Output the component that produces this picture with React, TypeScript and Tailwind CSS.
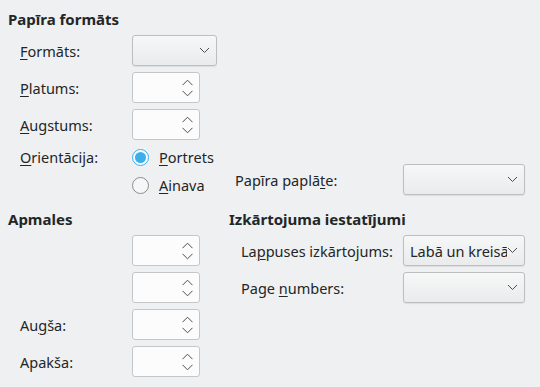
import type { ReactNode } from "react";

const font = { fontFamily: '"Noto Sans", "DejaVu Sans", sans-serif' };

function Mn({ children }: { children: ReactNode }) {
  return <span className="underline underline-offset-[2px] decoration-[1px]">{children}</span>;
}

function Chevron() {
  return (
    <svg width="11" height="7" viewBox="0 0 11 7" className="shrink-0">
      <path d="M1 1 L5.5 5.5 L10 1" fill="none" stroke="#4d4e50" strokeWidth="1" />
    </svg>
  );
}

function Combo({ w, text }: { w: string; text?: string }) {
  return (
    <div
      className={`${w} h-[31px] flex items-center pl-[6px] pr-[6px] rounded-[3px] border border-[#bcbebf] bg-gradient-to-b from-[#f6f7f7] to-[#eaebec] shadow-[0_1px_1px_rgba(0,0,0,0.08)]`}
    >
      <span className="flex-1 overflow-hidden whitespace-nowrap">{text}</span>
      <Chevron />
    </div>
  );
}

function Spin() {
  return (
    <div className="w-[68px] h-[31px] flex items-center justify-end pr-[6px] rounded-[3px] border border-[#c4c6c8] bg-[#fcfcfc]">
      <div className="flex flex-col gap-[4px]">
        <svg width="11" height="7" viewBox="0 0 11 7">
          <path d="M0.5 6.2 L5.5 1.2 L10.5 6.2" fill="none" stroke="#4d4e50" strokeWidth="1" />
        </svg>
        <svg width="11" height="7" viewBox="0 0 11 7">
          <path d="M0.5 0.8 L5.5 5.8 L10.5 0.8" fill="none" stroke="#4d4e50" strokeWidth="1" />
        </svg>
      </div>
    </div>
  );
}

function Radio({ checked, children }: { checked?: boolean; children: ReactNode }) {
  return (
    <div className="h-[22px] flex items-center gap-[10px]">
      {checked ? (
        <span className="w-[17px] h-[17px] rounded-full border border-[#3daee9] bg-[#fcfcfc] flex items-center justify-center">
          <span className="w-[11px] h-[11px] rounded-full bg-[#3daee9]" />
        </span>
      ) : (
        <span className="w-[17px] h-[17px] rounded-full border border-[#8a8c8e] bg-[#f6f7f7]" />
      )}
      <span>{children}</span>
    </div>
  );
}

function Row({ label, children }: { label?: ReactNode; children: ReactNode }) {
  return (
    <div className="flex items-center">
      <div className="w-[112px]">{label}</div>
      {children}
    </div>
  );
}

export default function App() {
  return (
    <div
      className="w-[540px] h-[387px] overflow-hidden bg-[#eff0f1] text-[#232627] text-[14.5px] leading-[20px]"
      style={font}
    >
      {/* Top: paper format */}
      <div className="flex items-end">
        <div className="w-[229px] pl-[8px] pt-[9px]">
          <h2 className="font-bold text-[15px]">Papīra formāts</h2>
          <div className="pl-[12px] mt-[6px] flex flex-col gap-[6px]">
            <Row label={<><Mn>F</Mn>ormāts:</>}>
              <Combo w="w-[85px]" />
            </Row>
            <Row label={<><Mn>P</Mn>latums:</>}>
              <Spin />
            </Row>
            <Row label={<><Mn>A</Mn>ugstums:</>}>
              <Spin />
            </Row>
            <div className="flex">
              <div className="w-[112px] h-[22px] flex items-center">
                <span>
                  <Mn>O</Mn>rientācija:
                </span>
              </div>
              <div className="flex flex-col gap-[6px]">
                <Radio checked>
                  <Mn>P</Mn>ortrets
                </Radio>
                <Radio>
                  <Mn>A</Mn>inava
                </Radio>
              </div>
            </div>
          </div>
        </div>
        <div className="flex items-center pl-[6px] pb-[1px]">
          <div className="w-[168px]">
            Papīra paplā<Mn>t</Mn>e:
          </div>
          <Combo w="w-[122px]" />
        </div>
      </div>

      {/* Bottom: margins and layout settings */}
      <div className="flex mt-[13px]">
        <div className="w-[229px] pl-[8px]">
          <h2 className="font-bold text-[15px]">Apmales</h2>
          <div className="pl-[12px] mt-[6px] flex flex-col gap-[6px]">
            <Row>
              <Spin />
            </Row>
            <Row>
              <Spin />
            </Row>
            <Row label={<>Au<Mn>g</Mn>ša:</>}>
              <Spin />
            </Row>
            <Row label="Apakša:">
              <Spin />
            </Row>
          </div>
        </div>
        <div>
          <h2 className="font-bold text-[15px]">Izkārtojuma iestatījumi</h2>
          <div className="pl-[12px] mt-[6px] flex flex-col gap-[6px]">
            <div className="flex items-center">
              <div className="w-[162px]">
                La<Mn>p</Mn>puses izkārtojums:
              </div>
              <Combo w="w-[122px]" text="Labā un kreisā lappuse" />
            </div>
            <div className="flex items-center">
              <div className="w-[162px]">
                Page <Mn>n</Mn>umbers:
              </div>
              <Combo w="w-[122px]" />
            </div>
          </div>
        </div>
      </div>
    </div>
  );
}
